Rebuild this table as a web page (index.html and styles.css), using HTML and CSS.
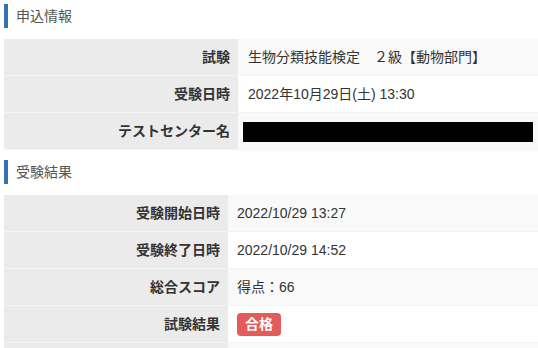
FILE: index.html
```html
<!DOCTYPE html>
<html lang="ja">
<head>
<meta charset="utf-8">
<link rel="stylesheet" href="styles.css">
</head>
<body>
<div class="page">
  <h2 class="heading">申込情報</h2>
  <table class="info info-apply">
    <tr><th>試験</th><td>生物分類技能検定　２級【動物部門】</td></tr>
    <tr><th>受験日時</th><td>2022年10月29日(土) 13:30</td></tr>
    <tr><th>テストセンター名</th><td><span class="redact"></span></td></tr>
  </table>
  <h2 class="heading">受験結果</h2>
  <table class="info info-result">
    <tr><th>受験開始日時</th><td>2022/10/29 13:27</td></tr>
    <tr><th>受験終了日時</th><td>2022/10/29 14:52</td></tr>
    <tr><th>総合スコア</th><td>得点：66</td></tr>
    <tr><th>試験結果</th><td><span class="badge">合格</span></td></tr>
    <tr><th>&nbsp;</th><td>&nbsp;</td></tr>
  </table>
</div>
</body>
</html>
```
FILE: styles.css
```css
html, body {
  margin: 0;
  padding: 0;
  background: #fff;
}
body {
  font-family: "Liberation Sans", "Noto Sans CJK JP", sans-serif;
  font-size: 14px;
  color: #333;
}
.page {
  padding: 4px 0 0 4px;
  height: 344px;
  overflow: hidden;
}
.heading {
  margin: 0 0 11px 0;
  border-left: 4px solid #3470b3;
  padding-left: 8px;
  height: 24px;
  line-height: 24px;
  font-size: 14px;
  font-weight: normal;
  color: #555;
}
.info + .heading {
  margin-top: 10px;
}
.info {
  width: 100%;
  border-collapse: collapse;
  table-layout: fixed;
}
.info th,
.info td {
  padding: 0;
  height: 36px;
  line-height: 20px;
  border-bottom: 1px solid #f4f4f4;
  vertical-align: middle;
  white-space: nowrap;
}
.info th {
  background: #ebebeb;
  text-align: right;
  padding-right: 8px;
  font-weight: bold;
  color: #333;
}
.info-apply th { width: 226px; }
.info-result th { width: 216px; }
.info td {
  padding-left: 10px;
  color: #333;
}
.info-result td { padding-left: 9px; }
.info tr:nth-child(odd) td { background: #f9f9f9; }
.info tr:nth-child(even) td { background: #fff; }
.redact {
  display: inline-block;
  width: 290px;
  height: 20px;
  margin-left: -5px;
  background: #000;
  vertical-align: middle;
}
.badge {
  display: inline-block;
  padding: 2px 8px;
  line-height: 19px;
  background: #e35b5b;
  color: #fff;
  font-weight: bold;
  border-radius: 4px;
  vertical-align: middle;
}
```
